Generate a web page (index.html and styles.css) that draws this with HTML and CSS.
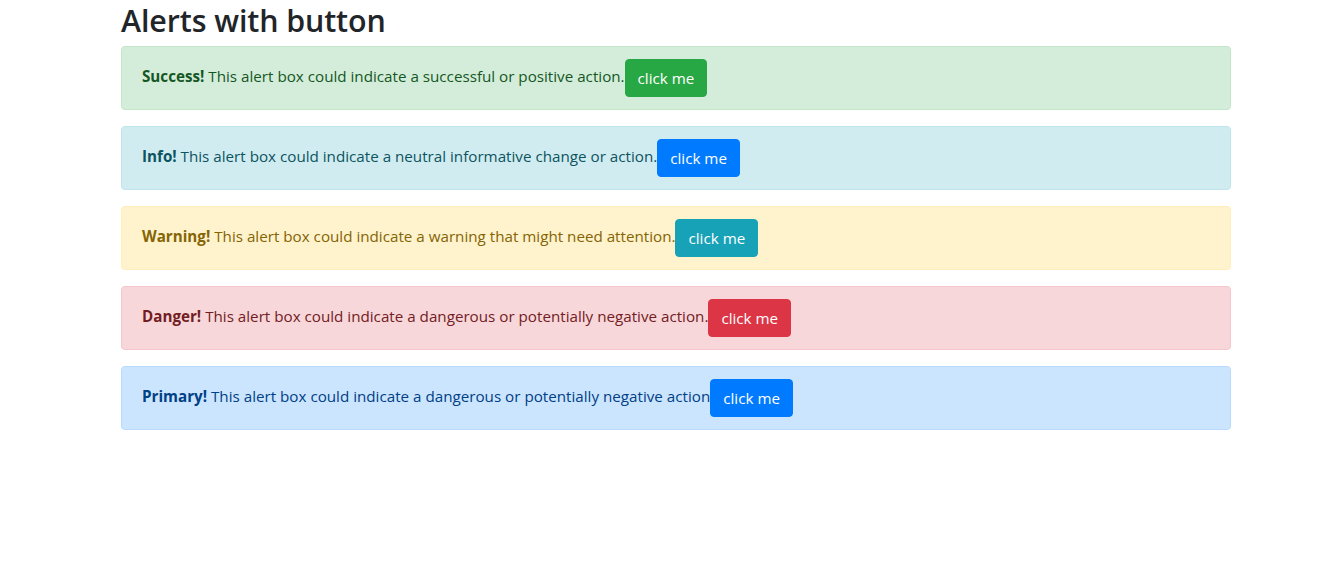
FILE: index.html
```html
<!DOCTYPE html>
<html lang="en">
<head>
<meta charset="utf-8">
<title>Alerts with button</title>
<link rel="stylesheet" href="styles.css">
</head>
<body>
<div class="container">
  <h2 class="title">Alerts with button</h2>
  <div class="alert alert-success"><strong>Success!</strong> This alert box could indicate a successful or positive action.<button class="btn btn-success">click me</button></div>
  <div class="alert alert-info"><strong>Info!</strong> This alert box could indicate a neutral informative change or action.<button class="btn btn-primary">click me</button></div>
  <div class="alert alert-warning"><strong>Warning!</strong> This alert box could indicate a warning that might need attention.<button class="btn btn-info">click me</button></div>
  <div class="alert alert-danger"><strong>Danger!</strong> This alert box could indicate a dangerous or potentially negative action.<button class="btn btn-danger">click me</button></div>
  <div class="alert alert-primary"><strong>Primary!</strong> This alert box could indicate a dangerous or potentially negative action<button class="btn btn-primary">click me</button></div>
</div>
</body>
</html>
```
FILE: styles.css
```css
* { box-sizing: border-box; }
html, body { margin: 0; padding: 0; }
body {
  font-family: "Open Sans", "Noto Sans", sans-serif;
  font-size: 15.2px;
  line-height: 24px;
  color: #212529;
  background: #fff;
}
.container {
  width: 1110px;
  margin-left: 121px;
}
.title {
  margin: 0 0 8px;
  font-size: 30.4px;
  font-weight: 600;
  line-height: 38.4px;
  letter-spacing: -0.1px;
  padding-top: 2px;
  height: 38.4px;
}
.alert {
  padding: 12px 20px;
  margin-bottom: 16px;
  border: 1px solid transparent;
  border-radius: 4px;
}
.alert strong { font-weight: 700; }
.alert-success { color: #155724; background: #d4edda; border-color: #c3e6cb; }
.alert-info { color: #0c5460; background: #d1ecf1; border-color: #bee5eb; }
.alert-warning { color: #856404; background: #fff3cd; border-color: #ffeeba; }
.alert-danger { color: #721c24; background: #f8d7da; border-color: #f5c6cb; }
.alert-primary { color: #004085; background: #cce5ff; border-color: #b8daff; }
.btn {
  display: inline-block;
  vertical-align: middle;
  font-family: inherit;
  font-size: 15.2px;
  line-height: 24px;
  padding: 6px 12px;
  border: 1px solid transparent;
  border-radius: 4px;
  color: #fff;
  cursor: pointer;
  margin: 0;
}
.btn-success { background: #28a745; border-color: #28a745; }
.btn-primary { background: #007bff; border-color: #007bff; }
.btn-info { background: #17a2b8; border-color: #17a2b8; }
.btn-danger { background: #dc3545; border-color: #dc3545; }
```
